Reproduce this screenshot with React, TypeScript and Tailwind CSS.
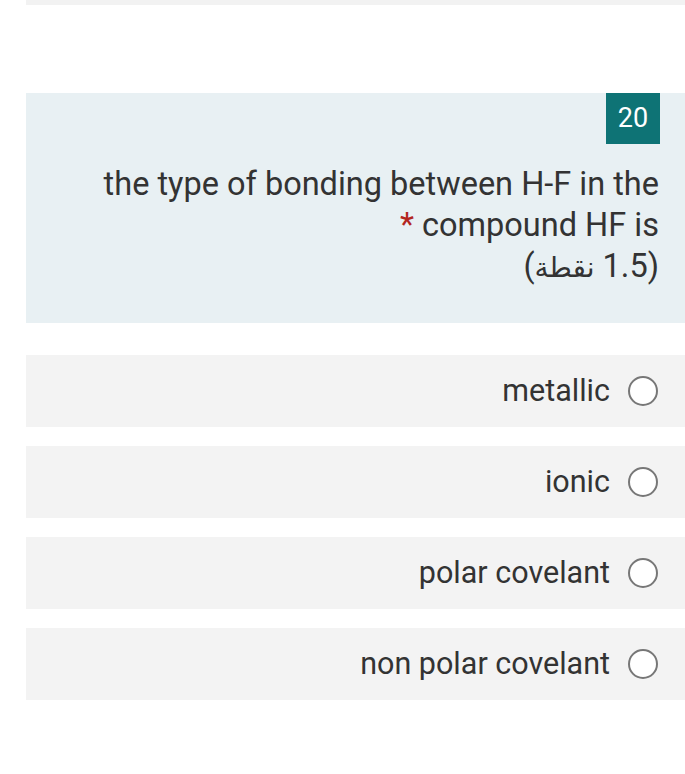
import { useState } from 'react';

const options = ['metallic', 'ionic', 'polar covelant', 'non polar covelant'];

export default function App() {
  const [selected, setSelected] = useState<string | null>(null);

  return (
    <div
      dir="rtl"
      className="min-h-screen bg-white text-[#333333]"
      style={{ fontFamily: 'Roboto, "DejaVu Sans", sans-serif' }}
    >
      <div className="ml-[26px] h-[5px] bg-[#f2f2f2]" />

      <div className="ml-[26px] mt-[88px] bg-[#e8f0f3] pb-[35px]">
        <div className="flex justify-start pr-[25px]">
          <div className="flex h-[51px] w-[54px] items-center justify-center bg-[#0e7375] text-[27px] text-white">
            20
          </div>
        </div>
        <div className="mt-[20px] pr-[26px] pl-[20px] text-right text-[32.5px] leading-[41px]">
          the type of bonding between H-F in the compound HF is{' '}
          <span className="text-[#b3261e]">*</span>
          <div>
            (1.5 <span className="text-[28px]">نقطة</span>)
          </div>
        </div>
      </div>

      <div className="mt-[32px] flex flex-col gap-[19px]">
        {options.map((o) => (
          <button
            key={o}
            onClick={() => setSelected(o)}
            className="ml-[26px] flex h-[72px] items-center gap-[18px] bg-[#f3f3f3] pr-[27px] text-[30.5px]"
          >
            <span className="flex h-[30px] w-[30px] shrink-0 items-center justify-center rounded-full border-2 border-[#777777] bg-white">
              {selected === o && <span className="h-[16px] w-[16px] rounded-full bg-[#0e7375]" />}
            </span>
            <span>{o}</span>
          </button>
        ))}
      </div>
    </div>
  );
}
